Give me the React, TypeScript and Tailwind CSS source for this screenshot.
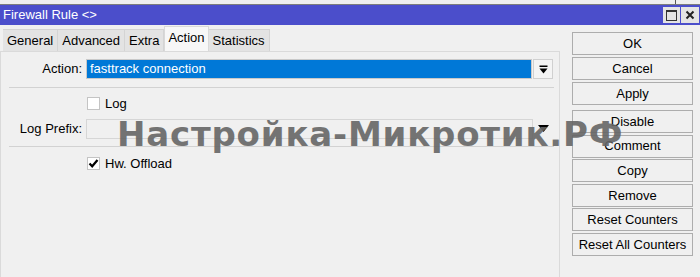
import React from 'react';

const tabs = ['General', 'Advanced', 'Extra', 'Action', 'Statistics'];

const groupOne = ['OK', 'Cancel', 'Apply'];
const groupTwo = ['Disable', 'Comment', 'Copy', 'Remove', 'Reset Counters', 'Reset All Counters'];

function SideButton({ label }: { label: string }) {
    return (
        <div className="flex h-[23px] items-center justify-center border border-[#adadad] bg-[#f0f0f0] text-[13px] text-black">
            {label}
        </div>
    );
}

function CheckBox({ checked, label }: { checked?: boolean; label: string }) {
    return (
        <div className="flex h-[13px] items-center pl-[86px]">
            <div className="flex h-[13px] w-[13px] items-center justify-center border border-[#c4c4c4] bg-white">
                {checked && (
                    <svg width="11" height="11" viewBox="0 0 11 11">
                        <path d="M1.5 5.5 L4.2 8.3 L9.5 2" fill="none" stroke="#000" strokeWidth="2.2" />
                    </svg>
                )}
            </div>
            <span className="ml-[5px] text-[13px] leading-none text-black">{label}</span>
        </div>
    );
}

export default function App() {
    return (
        <div className="relative h-[277px] w-[700px] overflow-hidden bg-[#f0f0f0] font-['Liberation_Sans',Arial,sans-serif] text-[13px]">

            {/* strip of the window behind */}
            <div className="relative h-[5px] border-b border-[#7d7d7d] bg-[#efefef]">
                <div className="absolute left-[675px] top-0 h-[4px] w-px bg-[#555]" />
            </div>

            {/* title bar */}
            <div className="flex h-[20px] items-center justify-between bg-[#4b4ecb] pl-[3px] pr-[1px]">
                <span className="text-[13px] text-white">Firewall Rule &lt;&gt;</span>
                <div className="flex gap-[1px]">
                    <div className="flex h-[16px] w-[17px] items-center justify-center bg-[#e4e4e4]">
                        <div className="h-[11px] w-[11px] border border-t-[2px] border-[#333]" />
                    </div>
                    <div className="flex h-[16px] w-[18px] items-center justify-center bg-[#e4e4e4]">
                        <svg width="10" height="10" viewBox="0 0 10 10">
                            <path d="M1.5 1.5 L8.5 8.5 M8.5 1.5 L1.5 8.5" stroke="#222" strokeWidth="2" />
                        </svg>
                    </div>
                </div>
            </div>

            <div className="flex">

                {/* left side: tabs and panel */}
                <div className="flex w-[560px] flex-col">
                    <div className="mt-[4px] flex h-[22px] items-end pl-[3px]">
                        {tabs.map((t) => (
                            t === 'Action' ? (
                                <div key={t} className="flex h-[25px] items-center border-x border-t border-[#d9d9d9] bg-[#f7f7f7] px-[3px] pb-[3px] text-black">
                                    {t}
                                </div>
                            ) : (
                                <div key={t} className="flex h-[22px] items-center border-r border-t border-[#d4d4d4] bg-[#e3e3e3] px-[4px] text-black">
                                    {t}
                                </div>
                            )
                        ))}
                    </div>

                    <div className="h-[226px] border-l border-r border-t border-[#dadada] pt-[7px]">
                        <div className="flex h-[20px] items-center">
                            <div className="w-[81px] text-right text-black">Action:</div>
                            <div className="ml-[4px] flex h-[20px] w-[446px] items-center border border-[#c9c9c9] bg-[#0078d7] pl-[3px] text-white">
                                fasttrack connection
                            </div>
                            <div className="ml-[1px] flex h-[20px] w-[20px] items-center justify-center border border-[#d0d0d0] bg-[#f4f4f4]">
                                <svg width="9" height="9" viewBox="0 0 9 9">
                                    <rect x="0.5" y="0.5" width="8" height="1.5" fill="#000" />
                                    <path d="M0.5 3.5 L8.5 3.5 L4.5 8.5 Z" fill="#000" />
                                </svg>
                            </div>
                        </div>

                        <div className="ml-[8px] mt-[8px] h-px w-[545px] bg-[#d2d2d2]" />

                        <div className="mt-[9px]">
                            <CheckBox label="Log" />
                        </div>

                        <div className="mt-[9px] flex h-[20px] items-center">
                            <div className="w-[81px] text-right text-black">Log Prefix:</div>
                            <div className="ml-[4px] h-[20px] w-[447px] border border-[#d6d6d6] bg-[#f0f0f0]" />
                            <svg className="ml-[5px]" width="11" height="8" viewBox="0 0 11 8">
                                <path d="M0 0 L11 0 L5.5 7 Z" fill="#000" />
                            </svg>
                        </div>

                        <div className="ml-[8px] mt-[7px] h-px w-[545px] bg-[#d2d2d2]" />

                        <div className="mt-[10px]">
                            <CheckBox checked label="Hw. Offload" />
                        </div>
                    </div>
                </div>

                {/* right side: buttons */}
                <div className="ml-[12px] flex w-[121px] flex-col pt-[7px]">
                    <div className="flex flex-col gap-[2px]">
                        {groupOne.map((b) => <SideButton key={b} label={b} />)}
                    </div>
                    <div className="mt-[5px] flex flex-col gap-[1.6px]">
                        {groupTwo.map((b) => <SideButton key={b} label={b} />)}
                    </div>
                </div>
            </div>

            {/* watermark */}
            <div className="pointer-events-none absolute left-[117px] top-[117px] font-['DejaVu_Sans',sans-serif] text-[34px] font-bold leading-none tracking-[0.8px] text-[#666666] opacity-90">
                Настройка-Микротик.РФ
            </div>
        </div>
    );
}
